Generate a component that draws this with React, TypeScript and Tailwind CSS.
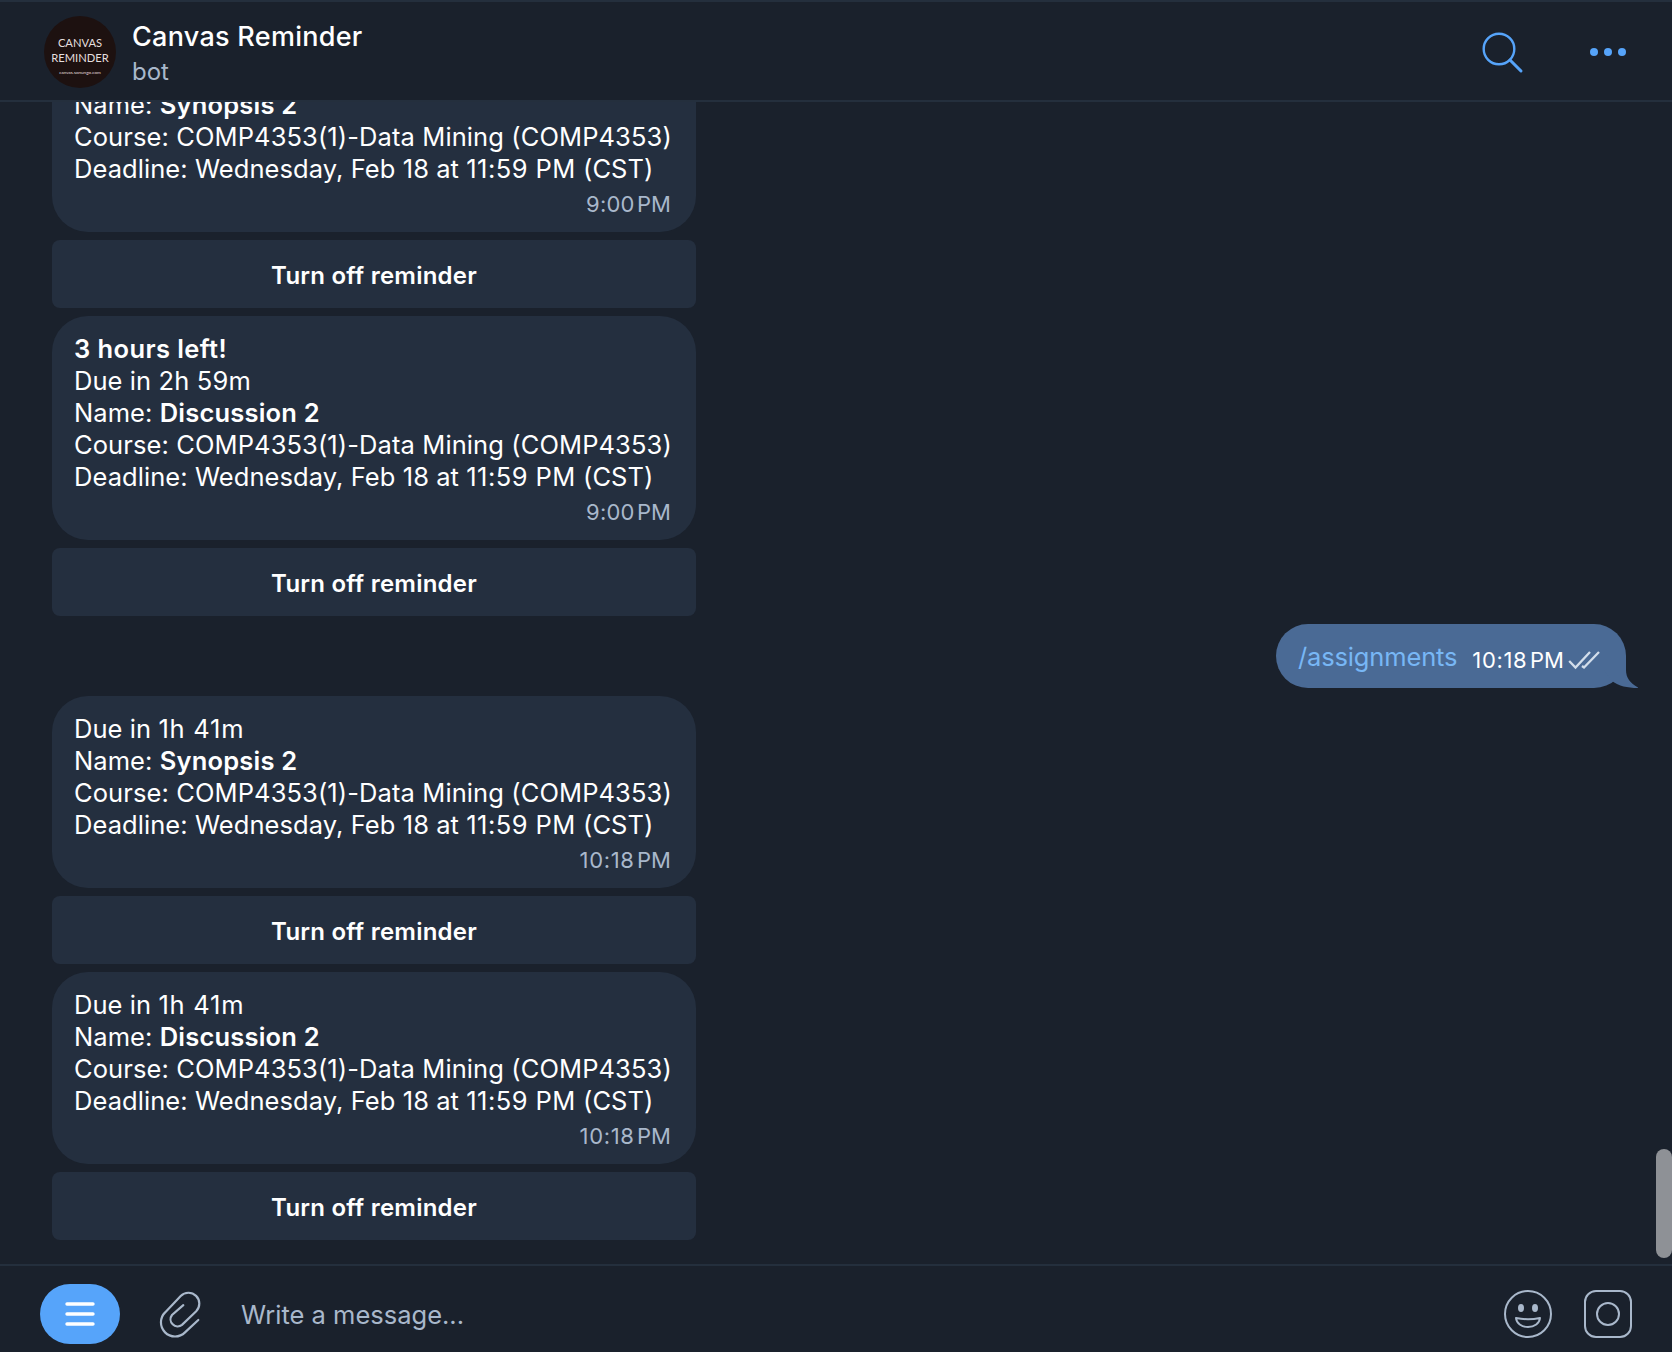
import clsx from "clsx";
import type { ReactNode } from "react";

interface Reminder {
  headline?: string;
  due?: string;
  name: string;
  time: string;
}

const COURSE = "COMP4353(1)-Data Mining (COMP4353)";

const earlier: Reminder[] = [
  { name: "Synopsis 2", time: "9:00" },
  { headline: "3 hours left!", due: "2h 59m", name: "Discussion 2", time: "9:00" },
];

const latest: Reminder[] = [
  { due: "1h 41m", name: "Synopsis 2", time: "10:18" },
  { due: "1h 41m", name: "Discussion 2", time: "10:18" },
];

// Inter's "1" is narrow, so values that contain it get wider tracking
const Figures = ({ value }: { value: string }) => (
  <span className={clsx(value.includes("1") ? "tracking-[0.03em]" : "tracking-[0.008em]")}>
    {value}
  </span>
);

const Time = ({ value }: { value: string }) => (
  <>
    <Figures value={value} />
    <span className="ml-[2.5px]">PM</span>
  </>
);

const Line = ({ children }: { children: ReactNode }) => (
  <p className="h-8 whitespace-nowrap">{children}</p>
);

const ReminderMessage = ({ reminder }: { reminder: Reminder }) => (
  <>
    <div className="flex min-h-48 w-[644px] shrink-0 flex-col justify-end rounded-[36px] bg-[#242f3f] pt-[17px] pr-[25px] pb-[11px] pl-[22px] text-[25.5px] leading-8 tracking-[0.07px]">
      {reminder.headline && (
        <Line>
          <b className="font-semibold tracking-[0.4px]">{reminder.headline}</b>
        </Line>
      )}
      {reminder.due && (
        <Line>
          Due in <Figures value={reminder.due} />
        </Line>
      )}
      <Line>
        Name: <b className="font-semibold tracking-[0.2px]">{reminder.name}</b>
      </Line>
      <p className="h-8 tracking-[0.1px] whitespace-nowrap">Course: {COURSE}</p>
      <Line>
        Deadline: Wednesday, Feb 18 at <span className="tracking-[0.45px]">11:59 PM</span> (CST)
      </Line>
      <p className="h-9 text-right text-[22px] leading-[38px] tracking-normal text-[#a9b8cb]">
        <Time value={reminder.time} />
      </p>
    </div>
    <button
      type="button"
      className="h-[68px] w-[644px] shrink-0 rounded-lg bg-[#242f3f] pt-1 text-[24px] font-semibold tracking-[0.22px]"
    >
      Turn off reminder
    </button>
  </>
);

const CommandMessage = () => (
  <div className="relative mr-[46px] flex h-16 w-[350px] shrink-0 items-center self-end rounded-[36px] bg-[#4a6a95] pt-0.5 pl-[22px]">
    <span className="text-[25.5px] tracking-[-0.15px] text-[#78b7f5]">/assignments</span>
    <span className="mt-1.5 ml-[15px] text-[22px] whitespace-nowrap">
      <Time value="10:18" />
    </span>
    <svg
      className="absolute top-[26px] right-[26px] h-5 w-8"
      viewBox="0 0 32 20"
      fill="none"
      stroke="#d3deeb"
      strokeWidth="2.3"
    >
      <path d="M1.2 11 7.5 17.5 22 2M14 16 16 17.500 31 2" />
    </svg>
    {/* bubble tail */}
    <svg className="absolute right-[-12px] bottom-0 h-8 w-[38px]" viewBox="0 0 38 32" fill="#4a6a95">
      <path d="M26 0V14C26 22 30 27 38 31.4V32C27 32 19 30 12 25L4 14V0Z" />
    </svg>
  </div>
);

const Header = () => (
  <header className="flex h-[102px] shrink-0 items-center border-y-2 border-[#242f3d] pt-1 pl-11">
    <div className="-mt-0.5 flex size-[72px] flex-col items-center rounded-full bg-[#1d1110] pt-[19px] font-[Lato] text-[#e5dfdf]">
      <span className="text-[11.2px] leading-[15px]">CANVAS</span>
      <span className="text-[11.2px] leading-[15px]">REMINDER</span>
      <span className="mt-[3px] text-[4.6px] leading-[8px]">canvas.sonungo.com</span>
    </div>
    <div className="mt-0.5 ml-4 flex flex-col">
      <h1 className="text-[27px] leading-9 font-medium tracking-[0.28px]">Canvas Reminder</h1>
      <p className="text-[24px] leading-[34px] text-[#a9b8cb]">bot</p>
    </div>
    <svg className="mr-px ml-auto h-[42px] w-[42px]" viewBox="0 0 42 42" fill="none" stroke="#56a4fa">
      <circle cx="17" cy="17" r="15.3" strokeWidth="2.4" />
      <path d="M28 28 39 39" strokeWidth="3" strokeLinecap="round" />
    </svg>
    <svg className="-mt-0.5 mr-[46px] ml-[65px] h-2 w-9" viewBox="0 0 36 8" fill="#56a4fa">
      <circle cx="4" cy="4" r="4" />
      <circle cx="18" cy="4" r="4" />
      <circle cx="32" cy="4" r="4" />
    </svg>
  </header>
);

const Composer = () => (
  <footer className="flex h-[88px] shrink-0 items-center border-t-2 border-[#242f3d] pt-3 pb-0.5 pl-10 text-[#a9b8cb]">
    <button type="button" className="flex h-[60px] w-20 items-center justify-center rounded-[30px] bg-[#56a4fa]">
      <svg className="h-6 w-[30px]" viewBox="0 0 30 24" stroke="#fff" strokeWidth="3.4" strokeLinecap="round">
        <path d="M2 2H28M2 12H28M2 22H28" />
      </svg>
    </button>
    <svg
      className="ml-[39px] h-12 w-[42px]"
      viewBox="0 0 42 48"
      fill="none"
      stroke="currentColor"
      strokeWidth="2.2"
      strokeLinecap="round"
    >
      <path d="M39.3 30 26 42.4A14 14 0 0 1 6.1 22.4L21.7 6A10.7 10.7 0 0 1 37.2 21.2L23 34.9A7.1 7.1 0 0 1 13 25L24.3 15.2" />
    </svg>
    <span className="mt-0.5 ml-[40px] text-[25.5px]">Write a message...</span>
    <svg className="ml-auto size-12" viewBox="0 0 48 48" fill="none" stroke="currentColor" strokeWidth="2">
      <circle cx="24" cy="24" r="23" />
      <ellipse cx="17" cy="18" rx="3" ry="4" fill="currentColor" stroke="none" />
      <ellipse cx="31" cy="18" rx="3" ry="4" fill="currentColor" stroke="none" />
      <path d="M12 28Q24 30.5 36 28C35.5 33.5 30.5 37 24 37S12.5 33.5 12 28Z" strokeLinejoin="round" />
    </svg>
    <svg className="mr-10 ml-8 size-12" viewBox="0 0 48 48" fill="none" stroke="currentColor" strokeWidth="2">
      <rect x="1" y="1" width="46" height="46" rx="11" />
      <circle cx="24" cy="24" r="11" />
    </svg>
  </footer>
);

export default function App() {
  return (
    <div className="flex h-[1352px] w-[1672px] flex-col overflow-hidden bg-[#1a212c] font-[Inter,sans-serif] text-white">
      <Header />
      <main className="relative flex min-h-0 flex-1 flex-col justify-end gap-2 overflow-hidden pb-6 pl-[52px]">
        {earlier.map((reminder) => (
          <ReminderMessage key={reminder.name} reminder={reminder} />
        ))}
        <CommandMessage />
        {latest.map((reminder) => (
          <ReminderMessage key={reminder.name} reminder={reminder} />
        ))}
        <div className="absolute right-0 bottom-[6px] h-[109px] w-4 rounded-full bg-[#8e9196]" />
      </main>
      <Composer />
    </div>
  );
}
